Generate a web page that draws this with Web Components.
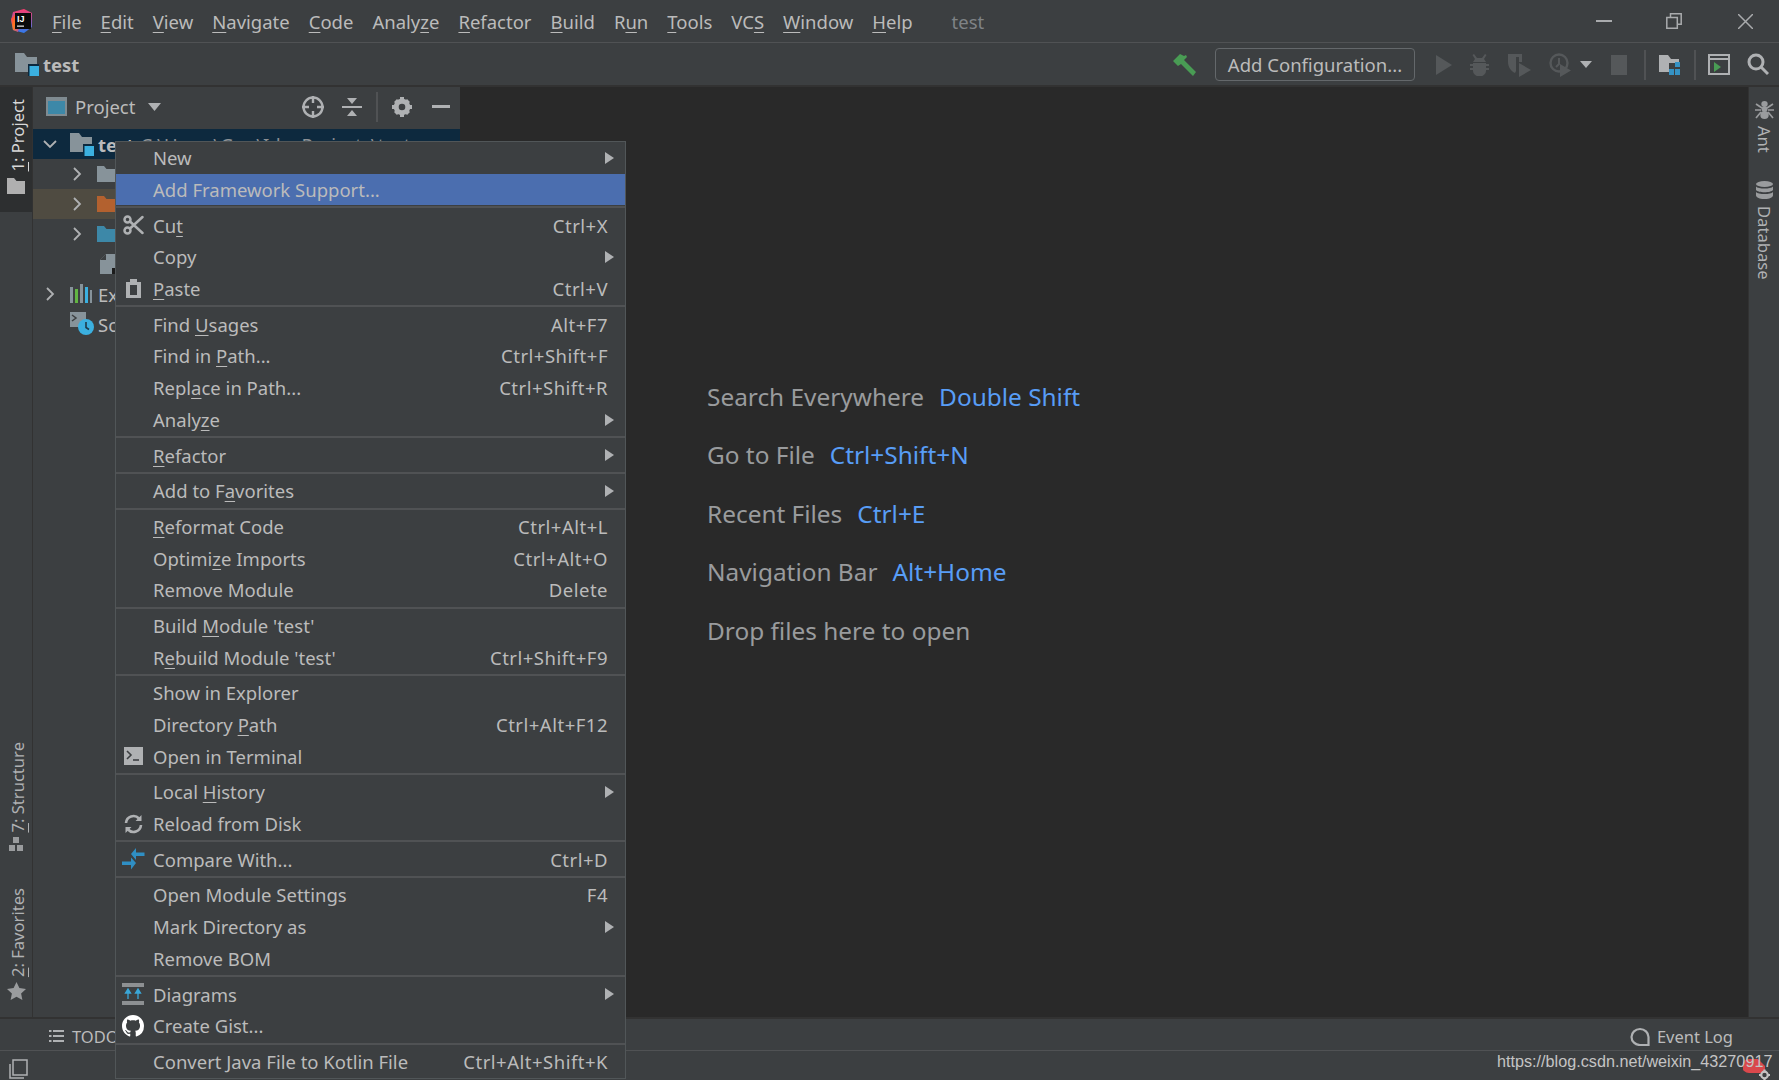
<!DOCTYPE html>
<html>
<head>
<meta charset="utf-8">
<title>test - IntelliJ IDEA</title>
<style>
  html, body { margin: 0; height: 100%; overflow: hidden; background: #3c3f41; }
</style>
</head>
<body>
<ide-app>
  <ide-titlebar slot="title">
    <ide-menu-name><u>F</u>ile</ide-menu-name>
    <ide-menu-name><u>E</u>dit</ide-menu-name>
    <ide-menu-name><u>V</u>iew</ide-menu-name>
    <ide-menu-name><u>N</u>avigate</ide-menu-name>
    <ide-menu-name><u>C</u>ode</ide-menu-name>
    <ide-menu-name>Analy<u>z</u>e</ide-menu-name>
    <ide-menu-name><u>R</u>efactor</ide-menu-name>
    <ide-menu-name><u>B</u>uild</ide-menu-name>
    <ide-menu-name>R<u>u</u>n</ide-menu-name>
    <ide-menu-name><u>T</u>ools</ide-menu-name>
    <ide-menu-name>VC<u>S</u></ide-menu-name>
    <ide-menu-name><u>W</u>indow</ide-menu-name>
    <ide-menu-name><u>H</u>elp</ide-menu-name>
  </ide-titlebar>
  <ide-navbar slot="nav"></ide-navbar>

  <ide-strip slot="left" side="left">
    <strip-tab active icon="folder"><u>1</u>: Project</strip-tab>
    <span style="flex:1"></span>
    <strip-tab icon="structure" style="gap:4px"><u>7</u>: Structure</strip-tab>
    <strip-tab icon="star" style="gap:5px;margin-top:37px;margin-bottom:17px"><u>2</u>: Favorites</strip-tab>
  </ide-strip>

  <project-panel slot="panel">
    <tree-row selected level="0" arrow="down" icon="module"><b>test</b><span style="color:#8c9094;margin-left:6px">C:\Users\Guo\IdeaProjects\test</span></tree-row>
    <tree-row level="1" arrow="right" icon="folder">.idea</tree-row>
    <tree-row level="1" arrow="right" icon="excluded" excluded>out</tree-row>
    <tree-row level="1" arrow="right" icon="source">src</tree-row>
    <tree-row level="1" icon="file">test.iml</tree-row>
    <tree-row level="0" arrow="right" icon="libs">External Libraries</tree-row>
    <tree-row level="0" icon="scratch">Scratches and Consoles</tree-row>
  </project-panel>

  <welcome-panel slot="editor">
    <welcome-line shortcut="Double Shift">Search Everywhere</welcome-line>
    <welcome-line shortcut="Ctrl+Shift+N">Go to File</welcome-line>
    <welcome-line shortcut="Ctrl+E">Recent Files</welcome-line>
    <welcome-line shortcut="Alt+Home">Navigation Bar</welcome-line>
    <welcome-line>Drop files here to open</welcome-line>
  </welcome-panel>

  <ide-strip slot="right" side="right">
    <strip-tab right icon="ant">Ant</strip-tab>
    <strip-tab right icon="database" style="margin-top:28px">Database</strip-tab>
  </ide-strip>

  <ide-bottombar slot="bottom"></ide-bottombar>
  <ide-statusbar slot="status"></ide-statusbar>

  <context-menu slot="overlay">
    <menu-item arrow>New</menu-item>
    <menu-item selected>Add Framework Support...</menu-item>
    <menu-sep></menu-sep>
    <menu-item key="Ctrl+X"><svg slot="icon" width="21" height="20" viewBox="0 0 21 20" fill="none" stroke="#afb1b3" stroke-width="2.500"><circle cx="4.500" cy="4.500" r="3"/><circle cx="4.500" cy="15.500" r="3"/><path d="M7 6.500 19.500 18M7 13.500 19.500 2" stroke-linecap="round"/></svg>Cu<u>t</u></menu-item>
    <menu-item arrow>Copy</menu-item>
    <menu-item key="Ctrl+V"><svg slot="icon" width="21" height="21" viewBox="0 0 21 21" fill="none"><path d="M3 4h15v16H3z" fill="#afb1b3"/><path d="M7 7h7v10H7z" fill="#3c3f41"/><path d="M7 1h7v5H7z" fill="#afb1b3"/></svg><u>P</u>aste</menu-item>
    <menu-sep></menu-sep>
    <menu-item key="Alt+F7">Find <u>U</u>sages</menu-item>
    <menu-item key="Ctrl+Shift+F">Find in <u>P</u>ath...</menu-item>
    <menu-item key="Ctrl+Shift+R">Repl<u>a</u>ce in Path...</menu-item>
    <menu-item arrow>Analy<u>z</u>e</menu-item>
    <menu-sep></menu-sep>
    <menu-item arrow><u>R</u>efactor</menu-item>
    <menu-sep></menu-sep>
    <menu-item arrow>Add to F<u>a</u>vorites</menu-item>
    <menu-sep></menu-sep>
    <menu-item key="Ctrl+Alt+L"><u>R</u>eformat Code</menu-item>
    <menu-item key="Ctrl+Alt+O">Optimi<u>z</u>e Imports</menu-item>
    <menu-item key="Delete">Remove Module</menu-item>
    <menu-sep></menu-sep>
    <menu-item>Build <u>M</u>odule 'test'</menu-item>
    <menu-item key="Ctrl+Shift+F9">R<u>e</u>build Module 'test'</menu-item>
    <menu-sep></menu-sep>
    <menu-item>Show in Explorer</menu-item>
    <menu-item key="Ctrl+Alt+F12">Directory <u>P</u>ath</menu-item>
    <menu-item><svg slot="icon" width="19" height="18" viewBox="0 0 19 18"><path d="M0 0h19v18H0z" fill="#afb1b3"/><path d="M3 4l4 4-4 4" fill="none" stroke="#3c3f41" stroke-width="1.600"/><path d="M9 13h6" stroke="#3c3f41" stroke-width="1.600"/></svg>Open in Terminal</menu-item>
    <menu-sep></menu-sep>
    <menu-item arrow>Local <u>H</u>istory</menu-item>
    <menu-item><svg slot="icon" width="21" height="20" viewBox="0 0 21 20" fill="none" stroke="#afb1b3" stroke-width="2.600"><path d="M3 9a7.500 7.500 0 0 1 13-4.500"/><path d="M18 11a7.500 7.500 0 0 1-13 4.500"/><path d="M18.500 1v6h-6z M2.500 19v-6h6z" fill="#afb1b3" stroke="none"/></svg>Reload from Disk</menu-item>
    <menu-sep></menu-sep>
    <menu-item key="Ctrl+D"><svg slot="icon" width="23" height="22" viewBox="0 0 23 22" fill="#2f8fc4"><path d="M9 6 14 0v4.500h8.500V8H14v4z"/><path d="M14 15 9 9.500V13.500H0V17h9v4.500z"/></svg>Compare With...</menu-item>
    <menu-sep></menu-sep>
    <menu-item key="F4">Open Module Settings</menu-item>
    <menu-item arrow>Mark Directory as</menu-item>
    <menu-item>Remove BOM</menu-item>
    <menu-sep></menu-sep>
    <menu-item arrow><svg slot="icon" width="22" height="22" viewBox="0 0 22 22"><path d="M0 0h22v4H0zM0 18h22v4H0z" fill="#8d9092"/><path d="M6 16V9M3.500 10 6 6l2.500 4zM16 16V9M13.500 10 16 6l2.500 4z" fill="#3aa7d8" stroke="#3aa7d8" stroke-width="1.300"/></svg>Diagrams</menu-item>
    <menu-item><svg slot="icon" width="22" height="22" viewBox="0 0 16 16"><path fill="#fff" d="M8 0C3.580 0 0 3.580 0 8c0 3.540 2.290 6.530 5.470 7.590.4.070.55-.17.55-.38 0-.19-.01-.82-.01-1.490-2.010.37-2.530-.49-2.690-.94-.09-.23-.48-.94-.82-1.130-.28-.15-.68-.52-.01-.53.63-.01 1.080.58 1.230.82.720 1.210 1.870.87 2.330.66.070-.52.280-.87.510-1.070-1.780-.2-3.640-.89-3.640-3.950 0-.87.310-1.590.820-2.150-.08-.2-.36-1.020.08-2.120 0 0 .67-.21 2.200.82.640-.18 1.320-.27 2-.27s1.360.09 2 .27c1.530-1.040 2.200-.82 2.200-.82.440 1.100.16 1.920.08 2.120.51.560.82 1.270.82 2.150 0 3.070-1.870 3.750-3.650 3.950.29.250.54.730.54 1.480 0 1.070-.01 1.930-.01 2.200 0 .21.150.46.550.38A8.010 8.010 0 0 0 16 8c0-4.420-3.580-8-8-8z"/></svg>Create Gist...</menu-item>
    <menu-sep></menu-sep>
    <menu-item key="Ctrl+Alt+Shift+K">Convert Java File to Kotlin File</menu-item>
  </context-menu>

  <span slot="overlay" style="position:absolute;left:1497px;top:1050px;font:16.200px/22px 'Liberation Sans',sans-serif;color:#c4c4c4;white-space:nowrap;z-index:5">https://blog.csdn.net/weixin_43270917</span>
</ide-app>

<script>
const UI_FONT = "'Noto Sans', 'Open Sans', sans-serif";

// small base class so every element only has to give its template
class IdeElement extends HTMLElement {
  connectedCallback() {
    if (this.shadowRoot) return;
    this.attachShadow({ mode: 'open' });
    this.shadowRoot.innerHTML = this.render();
  }
  render() { return '<slot></slot>'; }
}

const ICONS = {
  folder: '<svg width="18" height="16" viewBox="0 0 18 16"><path d="M0 0h7l2.500 3H18v13H0z" fill="#87939a"/></svg>',
  excluded: '<svg width="18" height="16" viewBox="0 0 18 16"><path d="M0 0h7l2.500 3H18v13H0z" fill="#b3612f"/></svg>',
  source: '<svg width="18" height="16" viewBox="0 0 18 16"><path d="M0 0h7l2.500 3H18v13H0z" fill="#3d88a8"/></svg>',
  module: '<svg width="24" height="23" viewBox="0 0 24 23"><path d="M0 0h9l3 4h10v15H0z" fill="#87939a"/><path d="M13 11h11v12H13z" fill="#0d293e"/><path d="M14.500 13H24v10h-9.500z" fill="#3bb0e0"/></svg>',
  file: '<svg style="margin-left:3px" width="18" height="20" viewBox="0 0 18 20"><path d="M6 0h10v20H0V6z" fill="#87939a"/><path d="M6 0v6H0z" fill="#3c3f41"/><path d="M12 14h6v6h-6z" fill="#1c1c1c"/></svg>',
  libs: '<svg width="22" height="20" viewBox="0 0 22 20"><path d="M0 3h3v16H0z" fill="#87939a"/><path d="M5 5h3v14H5z" fill="#62b543"/><path d="M10 0h3v19h-3z" fill="#87939a"/><path d="M15 3h3v16h-3z" fill="#3bb0e0"/><path d="M20 6h2v13h-2z" fill="#87939a"/></svg>',
  scratch: '<svg width="24" height="24" viewBox="0 0 24 24"><path d="M0 0h16v15H0z" fill="#87939a"/><path d="M2 3l4 3-4 3" fill="none" stroke="#3c3f41" stroke-width="1.500"/><circle cx="16" cy="15" r="8" fill="#3bb0e0"/><path d="M16 10v5.500l3 2" fill="none" stroke="#1f3a4a" stroke-width="1.600"/></svg>'
};

class IdeApp extends IdeElement {
  render() {
    return `<style>
      :host { display: flex; flex-direction: column; position: relative; height: 1080px; width: 1779px; overflow: hidden;
              background: #3c3f41; color: #bbbbbb; font-family: ${UI_FONT}; font-size: 18.500px; }
      .main { display: flex; height: 930px; }
      .center { flex: 1; display: flex; min-width: 0; }
    </style>
    <slot name="title"></slot>
    <slot name="nav"></slot>
    <div class="main">
      <slot name="left"></slot>
      <slot name="panel"></slot>
      <div class="center"><slot name="editor"></slot></div>
      <slot name="right"></slot>
    </div>
    <slot name="bottom"></slot>
    <slot name="status"></slot>
    <slot name="overlay"></slot>`;
  }
}

class IdeTitlebar extends IdeElement {
  render() {
    return `<style>
      :host { display: flex; align-items: center; height: 42px; border-bottom: 1px solid #505254; box-sizing: content-box; }
      .logo { margin-left: 10px; width: 23px; flex: none; height: 24px; }
      .items { display: flex; height: 100%; align-items: center; padding-top: 1px; box-sizing: border-box; }
      .name { margin-left: 39px; color: #7f8386; }
      .win { margin-left: auto; display: flex; align-items: center; height: 100%; }
      .win svg { display: block; }
    </style>
    <div class="logo"><svg width="24" height="24" viewBox="0 0 24 24">
      <defs>
        <linearGradient id="a" x1="0" y1="0" x2="1" y2="1"><stop offset="0" stop-color="#fe2857"/><stop offset=".5" stop-color="#fe7b1e"/><stop offset="1" stop-color="#8f3fd0"/></linearGradient>
        <linearGradient id="b" x1="0" y1="0" x2="0" y2="1"><stop offset="0" stop-color="#fc3b6e"/><stop offset="1" stop-color="#2d7bf0"/></linearGradient>
      </defs>
      <path d="M3 3 14 0l8 4v14l-8 6-11-3L1 11z" fill="url(#b)"/>
      <path d="M1 10 7 3l4 8-3 12-5-2z" fill="url(#a)"/>
      <path d="M5 4h16v16H5z" fill="#0b0b0b"/>
      <text x="7" y="12.500" font-family="Liberation Sans" font-weight="700" font-size="9" fill="#fff">IJ</text>
      <path d="M7 16.500h7v1.300H7z" fill="#dcdcdc"/>
    </svg></div>
    <div class="items"><slot></slot></div>
    <span class="name">test</span>
    <div class="win">
      <svg style="margin-right:54px" width="16" height="2"><path d="M0 0h16v2H0z" fill="#a9abad"/></svg>
      <svg style="margin-right:56px" width="16" height="16" fill="none" stroke="#a9abad" stroke-width="1.500"><path d="M.8 4.500h10.500v10.700H.8z"/><path d="M4.500 4V.8h10.700v10.500h-3.500"/></svg>
      <svg style="margin-right:26px" width="15" height="15" fill="none" stroke="#a9abad" stroke-width="1.500"><path d="M0 0l15 15M15 0 0 15"/></svg>
    </div>`;
  }
}

class IdeMenuName extends IdeElement {
  render() {
    return `<style>
      :host { display: block; padding-left: 19px; white-space: nowrap; }
      ::slotted(u) { text-underline-offset: 3px; }
    </style><slot></slot>`;
  }
}

class IdeNavbar extends IdeElement {
  render() {
    const off = '#55585a';
    return `<style>
      :host { display: flex; align-items: center; height: 41px; padding-top: 1px; border-bottom: 2px solid #323232; }
      .crumb { display: flex; align-items: center; margin-left: 15px; font-weight: 700; gap: 4px; }
      .tools { margin-left: auto; display: flex; align-items: center; height: 100%; }
      .tools > * { flex: none; }
      .btn { margin: 0 21px 0 18px; width: 200px; height: 33px; box-sizing: border-box; border: 1.500px solid #64686b; border-radius: 4px;
             display: flex; align-items: center; justify-content: center; white-space: nowrap; }
      .sep { width: 2px; height: 30px; background: #505254; }
    </style>
    <div class="crumb">${ICONS.module}<span>test</span></div>
    <div class="tools">
      <svg width="24" height="22" viewBox="0 0 24 22"><path d="M0 7 7 0l4 2 2-1 1 2-3 3 12 12-3 4L8 10 5 12z" fill="#499c54"/></svg>
      <div class="btn">Add Configuration...</div>
      <svg width="16" height="20" viewBox="0 0 16 20" style="margin-right:18px"><path d="M0 0l16 10L0 20z" fill="${off}"/></svg>
      <svg width="19" height="22" viewBox="0 0 19 22" style="margin-right:19px" fill="${off}"><path d="M4 0l3 4h5l3-4 1.500 1L14 5l2 3H3l2-3-2.500-4z"/><path d="M3 9h13v8a6 5 0 0 1-13 0z"/><path d="M0 10h3v2H0zM16 10h3v2h-3zM0 14h3v2H0zM16 14h3v2h-3z"/></svg>
      <svg width="23" height="24" viewBox="0 0 23 24" style="margin-right:18px" fill="${off}"><path d="M0 1h14v8h-3V4H8v14l-1 2C3 18 0 14 0 9z"/><path d="M11 10l12 7-12 7z"/></svg>
      <svg width="22" height="24" viewBox="0 0 22 24" style="margin-right:9px"><circle cx="10" cy="10" r="8.500" fill="none" stroke="${off}" stroke-width="2.400"/><path d="M10 5v6l-3 3" fill="none" stroke="${off}" stroke-width="2"/><path d="M11 11l11 6.500L11 24z" fill="${off}"/></svg>
      <svg width="12" height="7" style="margin-right:19px"><path d="M0 0h12L6 7z" fill="#afb1b3"/></svg>
      <svg width="16" height="20" style="margin-right:17px"><path d="M0 0h16v20H0z" fill="${off}"/></svg>
      <span class="sep" style="margin-right:13px"></span>
      <svg width="22" height="22" viewBox="0 0 22 22" style="margin-right:13px"><path d="M0 1h9l3 4h8v13H0z" fill="#afb1b3"/><path d="M10 9h12v13H10z" fill="#3c3f41"/><path d="M16 8h5v5h-5zM10 15h5v6h-5zM16 15h5v6h-5z" fill="#3592c4"/></svg>
      <span class="sep" style="margin-right:12px"></span>
      <svg width="22" height="21" viewBox="0 0 22 21" style="margin-right:17px"><path d="M1 1h20v19H1z" fill="none" stroke="#afb1b3" stroke-width="2"/><path d="M1 5h20" stroke="#afb1b3" stroke-width="2"/><path d="M6 8l7 5-7 5z" fill="#499c54"/></svg>
      <svg width="22" height="23" viewBox="0 0 22 23" style="margin-right:10px" fill="none" stroke="#afb1b3" stroke-width="3"><circle cx="9" cy="9" r="7"/><path d="M14 14l7 7"/></svg>
    </div>`;
  }
}

class IdeStrip extends IdeElement {
  render() {
    const right = this.getAttribute('side') === 'right';
    return `<style>
      :host { display: flex; flex-direction: column; flex: none; box-sizing: border-box; height: 100%; width: ${right ? 31 : 33}px;
              ${right ? 'border-left: 1px solid #323232; padding-top: 14px;' : 'border-right: 1px solid #323232;'} }
    </style><slot></slot>`;
  }
}

class StripTab extends IdeElement {
  render() {
    const svg = {
      folder: '<svg width="18" height="16" viewBox="0 0 18 16"><path d="M0 0h7l2.500 3H18v13H0z" fill="#b0b0b0"/></svg>',
      structure: '<svg width="14" height="14" viewBox="0 0 14 14" fill="#9a9c9e"><path d="M4 0h6v6H4zM0 8h6v6H0zM8 8h6v6H8z"/></svg>',
      star: '<svg width="19" height="18" viewBox="0 0 19 18"><path d="M9.500 0l2.900 6.100 6.600.8-4.900 4.500 1.300 6.600-5.900-3.300L3.600 18l1.300-6.600L0 6.900l6.600-.8z" fill="#9a9c9e"/></svg>',
      ant: '<svg width="19" height="18" viewBox="0 0 19 18" fill="#9a9c9e"><ellipse cx="9.500" cy="3" rx="3.200" ry="3"/><ellipse cx="9.500" cy="8" rx="3" ry="2.800"/><ellipse cx="9.500" cy="14" rx="4.200" ry="4"/><path d="M1 3l6 4M18 3l-6 4M0 9h6M19 9h-6M1 17l5-6M18 17l-5-6" stroke="#9a9c9e" stroke-width="1.700" fill="none"/></svg>',
      database: '<svg width="17" height="18" viewBox="0 0 17 18" fill="#9a9c9e"><ellipse cx="8.500" cy="3" rx="8.500" ry="3"/><path d="M0 5.500c2 2.700 15 2.700 17 0V9c-2 3-15 3-17 0zM0 11c2 2.700 15 2.700 17 0v3.500c-1 4.700-16 4.700-17 0z"/></svg>'
    };
    const active = this.hasAttribute('active');
    const right = this.hasAttribute('right');
    return `<style>
      :host { display: flex; flex-direction: ${right ? 'column' : 'column-reverse'}; align-items: center; gap: 7px; flex: none; white-space: nowrap;
              font-size: 16.600px; color: ${active ? '#d8d8d8' : '#afb1b3'};
              ${active ? 'background:#2d2f30;padding:12px 0 18px;' : ''} }
      .t { writing-mode: vertical-rl; ${right ? '' : 'transform: rotate(180deg);'} line-height: 20px; position: relative; ${right ? '' : 'left: 2px;'} }
      svg { display: block; }
      ::slotted(u) { text-underline-offset: 2px; }
    </style>
    <span class="i">${svg[this.getAttribute('icon')]}</span>
    <span class="t"><slot></slot></span>`;
  }
}

class ProjectPanel extends IdeElement {
  render() {
    return `<style>
      :host { display: flex; flex-direction: column; flex: none; width: 427px; overflow: hidden; }
      .head { display: flex; align-items: center; height: 39px; padding-bottom: 3px; flex: none; padding-left: 13px; }
      .tt { margin-left: 8px; }
      .caret { margin-left: 13px; }
      .acts { margin-left: auto; display: flex; align-items: center; padding-right: 10px; }
      svg { display: block; flex: none; }
    </style>
    <div class="head">
      <svg width="21" height="19" viewBox="0 0 21 19"><path d="M0 0h21v19H0z" fill="#7f8b91"/><path d="M2 4h17v13H2z" fill="#3d88a8"/></svg>
      <span class="tt">Project</span>
      <svg class="caret" width="13" height="8"><path d="M0 0h13L6.500 8z" fill="#afb1b3"/></svg>
      <div class="acts">
        <svg width="22" height="22" viewBox="0 0 22 22" fill="none" stroke="#afb1b3" stroke-width="2.400"><circle cx="11" cy="11" r="9.500"/><path d="M11 0v7M11 15v7M0 11h7M15 11h7"/></svg>
        <svg style="margin-left:18px" width="20" height="20" viewBox="0 0 20 20" fill="#afb1b3"><path d="M0 9h20v2H0zM5 1h10l-5 6zM5 19h10l-5-6z"/></svg>
        <span style="width:2px;height:30px;background:#505254;margin:0 14px"></span>
        <svg width="20" height="20" viewBox="0 0 20 20"><circle cx="10" cy="10" r="5.800" fill="none" stroke="#afb1b3" stroke-width="5"/><path d="M8 0h4v4H8zM8 16h4v4H8zM0 8h4v4H0zM16 8h4v4h-4zM2 5l3-3 2 2-3 3zM15 18l3-3-2-2-3 3zM2 15l3 3 2-2-3-3zM15 2l3 3-2 2-3-3z" fill="#afb1b3"/></svg>
        <svg style="margin-left:20px" width="18" height="3"><path d="M0 0h18v3H0z" fill="#afb1b3"/></svg>
      </div>
    </div>
    <slot></slot>`;
  }
}

class TreeRow extends IdeElement {
  render() {
    const level = +this.getAttribute('level');
    const arrow = this.getAttribute('arrow');
    const bg = this.hasAttribute('selected') ? '#0d293e' : this.hasAttribute('excluded') ? '#4f4b41' : 'transparent';
    const chev = arrow === 'down'
      ? '<svg width="14" height="9" viewBox="0 0 14 9" fill="none" stroke="#afb1b3" stroke-width="1.800"><path d="M1 1l6 6 6-6"/></svg>'
      : arrow === 'right' ? '<svg width="9" height="14" viewBox="0 0 9 14" fill="none" stroke="#afb1b3" stroke-width="1.800"><path d="M1 1l6 6-6 6"/></svg>' : '';
    return `<style>
      :host { display: flex; align-items: center; height: 30px; background: ${bg}; white-space: nowrap; position: relative; }
      .a { width: 14px; margin-left: ${level ? 37 : 10}px; display: flex; justify-content: ${arrow === 'down' ? 'flex-start' : 'center'}; flex: none; }
      .i { margin-left: 13px; width: ${level ? 22 : 28}px; flex: none; display: flex; }
      svg { display: block; }
    </style>
    <span class="a">${chev}</span><span class="i">${ICONS[this.getAttribute('icon')]}</span><slot></slot>`;
  }
}

class WelcomePanel extends IdeElement {
  render() {
    return `<style>
      :host { display: block; flex: 1; background: #292929; padding: 279.750px 0 0 247px; box-sizing: border-box; height: 100%; }
    </style><slot></slot>`;
  }
}

class WelcomeLine extends IdeElement {
  render() {
    const key = this.getAttribute('shortcut');
    return `<style>
      :host { display: flex; align-items: center; gap: 15px; height: 58.500px; font-size: 24.400px; color: #999b9d; }
      span { color: #589df6; }
    </style><slot></slot>${key ? `<span>${key}</span>` : ''}`;
  }
}

class IdeBottombar extends IdeElement {
  render() {
    return `<style>
      :host { display: flex; align-items: center; height: 28px; padding-top: 3px; border-top: 2px solid #323232; border-bottom: 1px solid #505254; font-size: 16.500px; }
      .todo { display: flex; align-items: center; margin-left: 49px; gap: 8px; }
      .ev { margin-left: auto; margin-right: 46px; display: flex; align-items: center; gap: 7px; }
      svg { display: block; }
    </style>
    <div class="todo">
      <svg width="15" height="12" viewBox="0 0 15 12" fill="#afb1b3"><path d="M0 0h2.500v2H0zM4 0h11v2H4zM0 5h2.500v2H0zM4 5h11v2H4zM0 10h2.500v2H0zM4 10h11v2H4z"/></svg>
      <span>TODO</span>
    </div>
    <div class="ev">
      <svg width="20" height="19" viewBox="0 0 20 19" fill="none" stroke="#afb1b3" stroke-width="2.200"><path d="M18.500 18H10a8.500 8 0 1 1 8.500-8z"/></svg>
      <span>Event Log</span>
    </div>`;
  }
}

class IdeStatusbar extends IdeElement {
  render() {
    return `<style>
      :host { display: block; height: 29px; position: relative; }
      .left { margin: 8px 0 0 9px; display: block; }
      .blob { position: absolute; right: 14px; top: 8px; }
      .gear { position: absolute; right: 9px; top: 18px; }
    </style>
    <svg class="left" width="19" height="20" viewBox="0 0 19 20" fill="none" stroke="#afb1b3" stroke-width="1.500"><path d="M4 1h14v15H4z"/><path d="M1 5v14h14"/></svg>
    <svg class="blob" width="22" height="14" viewBox="0 0 22 14"><path d="M6 0h9l7 7v7H6a7 7 0 0 1 0-14z" fill="#d9484c"/></svg>
    <svg class="gear" width="11" height="12" viewBox="0 0 20 20"><circle cx="10" cy="10" r="6" fill="none" stroke="#c4c4c4" stroke-width="4"/><path d="M8 0h4v4H8zM8 16h4v4H8zM0 8h4v4H0zM16 8h4v4h-4z" fill="#c4c4c4"/></svg>`;
  }
}

class ContextMenu extends IdeElement {
  render() {
    return `<style>
      :host { position: absolute; left: 115px; top: 141px; width: 511px; height: 938px; box-sizing: border-box;
              background: #3c3f41; border: 1px solid #515658; display: block; z-index: 3; overflow: hidden; }
    </style><slot></slot>`;
  }
}

class MenuItem extends IdeElement {
  render() {
    const key = this.getAttribute('key');
    const sel = this.hasAttribute('selected');
    return `<style>
      :host { display: flex; align-items: center; height: 31.700px; padding-left: 37px; position: relative; white-space: nowrap;
              background: ${sel ? '#4b6eaf' : 'transparent'}; }
      .icon { position: absolute; left: 5px; top: 0; bottom: 0; width: 24px; display: flex; align-items: center; justify-content: center; }
      .key { margin-left: auto; margin-right: 17px; letter-spacing: .5px; }
      .arr { position: absolute; left: 489px; top: 10px; }
      ::slotted(u) { text-underline-offset: 3px; }
    </style>
    <span class="icon"><slot name="icon"></slot></span>
    <span class="label"><slot></slot></span>
    ${key ? `<span class="key">${key}</span>` : ''}
    ${this.hasAttribute('arrow') ? '<svg class="arr" width="9" height="12"><path d="M0 0l9 6-9 6z" fill="#afb1b3"/></svg>' : ''}`;
  }
}

class MenuSep extends IdeElement {
  render() {
    return `<style>
      :host { display: flex; align-items: center; height: 4px; }
      i { display: block; height: 2px; width: 100%; background: #505254; }
    </style><i></i>`;
  }
}

customElements.define('ide-app', IdeApp);
customElements.define('ide-titlebar', IdeTitlebar);
customElements.define('ide-menu-name', IdeMenuName);
customElements.define('ide-navbar', IdeNavbar);
customElements.define('ide-strip', IdeStrip);
customElements.define('strip-tab', StripTab);
customElements.define('project-panel', ProjectPanel);
customElements.define('tree-row', TreeRow);
customElements.define('welcome-panel', WelcomePanel);
customElements.define('welcome-line', WelcomeLine);
customElements.define('ide-bottombar', IdeBottombar);
customElements.define('ide-statusbar', IdeStatusbar);
customElements.define('context-menu', ContextMenu);
customElements.define('menu-item', MenuItem);
customElements.define('menu-sep', MenuSep);
</script>
</body>
</html>
